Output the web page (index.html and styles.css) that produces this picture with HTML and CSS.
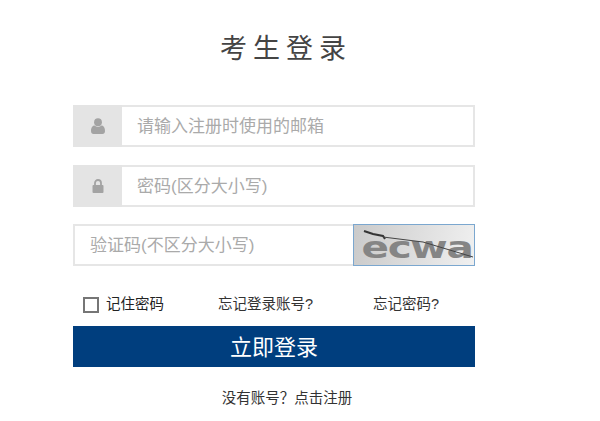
FILE: index.html
```html
<!DOCTYPE html>
<html>
    <head>
        <meta charset="utf-8">
        <link rel="stylesheet" href="styles.css">
    </head>
    <body>
        <!--login form starts-->
        <form class="login">
            <h1 class="title">考生登录</h1>

            <div class="field">
                <span class="addon">
                    <svg width="14" height="16" viewBox="0 0 14 16"><circle cx="7" cy="4.2" r="3.9" fill="#a3a3a3"/><path d="M0 13c0-4 2-5.500 3.500-5.500 1 .8 2.200 1.200 3.500 1.200s2.500-.4 3.500-1.200C12 7.500 14 9 14 13c0 1.800-1 3-2.500 3h-9C1 16 0 14.800 0 13z" fill="#a3a3a3"/></svg>
                </span>
                <input type="text" class="text-input" placeholder="请输入注册时使用的邮箱">
            </div>

            <div class="field">
                <span class="addon">
                    <svg width="12" height="14" viewBox="0 0 12 14"><path d="M3 6V4a3 3 0 0 1 6 0v2" fill="none" stroke="#a3a3a3" stroke-width="1.800"/><rect x="0.500" y="6" width="11" height="8" rx="1" fill="#a3a3a3"/></svg>
                </span>
                <input type="text" class="text-input" placeholder="密码(区分大小写)">
            </div>

            <div class="field captcha-field">
                <input type="text" class="text-input" placeholder="验证码(不区分大小写)">
                <div class="captcha">
                    <span class="captcha-text">ecwa</span>
                    <svg class="captcha-line" width="120" height="40" viewBox="0 0 120 40"><path d="M10 6l9 3 10 2 2 3" fill="none" stroke="#333" stroke-width="2"/><path d="M29 12l40 5 50 15" fill="none" stroke="#444" stroke-width="1"/></svg>
                </div>
            </div>

            <div class="options">
                <label class="remember"><span class="checkbox"></span>记住密码</label>
                <a href="#" class="option-link account-link">忘记登录账号?</a>
                <a href="#" class="option-link">忘记密码?</a>
            </div>

            <button type="button" class="loginbtn">立即登录</button>

            <p class="register"><a href="#">没有账号？点击注册</a></p>
        </form>
        <!--login form ends-->
    </body>
</html>
```

FILE: styles.css
```css
* {box-sizing: border-box}

body {
  margin: 0;
  background: #fff;
  font-family: "Liberation Sans", "Noto Sans CJK SC", sans-serif;
  overflow: hidden;
}

/* Form column */
.login {
  width: 402px;
  margin-left: 73px;
  padding-top: 32px;
}

.title {
  margin: 0 0 39px 0;
  padding-left: 24px;
  height: 34px;
  line-height: 34px;
  text-align: center;
  font-size: 27px;
  font-weight: normal;
  letter-spacing: 6px;
  color: #444;
}

/* Input rows */
.field {
  display: flex;
  height: 42px;
  margin-bottom: 18px;
  border: 2px solid #e6e6e6;
}

.captcha-field {
  margin-bottom: 0;
  margin-top: -1px;
  border-right: none;
}

.addon {
  width: 49px;
  margin: -2px 0 -2px -2px;
  background: #e4e4e4;
  display: flex;
  align-items: center;
  justify-content: center;
  flex-shrink: 0;
}

.text-input {
  flex: 1;
  min-width: 0;
  border: none;
  outline: none;
  padding: 2px 0 0 15px;
  font-family: inherit;
  font-size: 17px;
  background: #fff;
}

.text-input::placeholder {
  color: #aaa;
  opacity: 1;
}

/* Captcha picture */
.captcha {
  position: relative;
  width: 122px;
  margin: -2px 0;
  border: 1px solid #7ba7cf;
  background: linear-gradient(100deg, #cacaca, #f0f0f0);
  overflow: hidden;
  flex-shrink: 0;
}

.captcha-text {
  display: block;
  padding-top: 5px;
  margin-left: 6px;
  text-align: center;
  font-family: "DejaVu Sans", sans-serif;
  font-size: 30px;
  font-weight: bold;
  line-height: 36px;
  letter-spacing: -1px;
  color: #858585;
  transform: scaleX(1.35);
}

.captcha-line {
  position: absolute;
  top: 0;
  left: 0;
}

/* Remember me and links */
.options {
  display: flex;
  align-items: center;
  height: 16px;
  margin-top: 28px;
  font-size: 14.500px;
  color: #333;
}

.remember {
  display: flex;
  align-items: center;
  width: 145px;
  padding-left: 10px;
  color: #222;
}

.checkbox {
  width: 16px;
  height: 16px;
  margin: 6px 7px 0 0;
  border: 2px solid #767676;
}

.option-link {
  color: #333;
  text-decoration: none;
}

.account-link {
  width: 155px;
}

.loginbtn {
  display: block;
  width: 100%;
  height: 41px;
  margin-top: 16px;
  padding-bottom: 4px;
  border: none;
  background: #003e7e;
  color: #fff;
  font-family: inherit;
  font-size: 22px;
  cursor: pointer;
}

.register {
  margin: 19px 0 0 0;
  padding-left: 26px;
  text-align: center;
  font-size: 14.500px;
}

.register a {
  color: #333;
  text-decoration: none;
}
```
